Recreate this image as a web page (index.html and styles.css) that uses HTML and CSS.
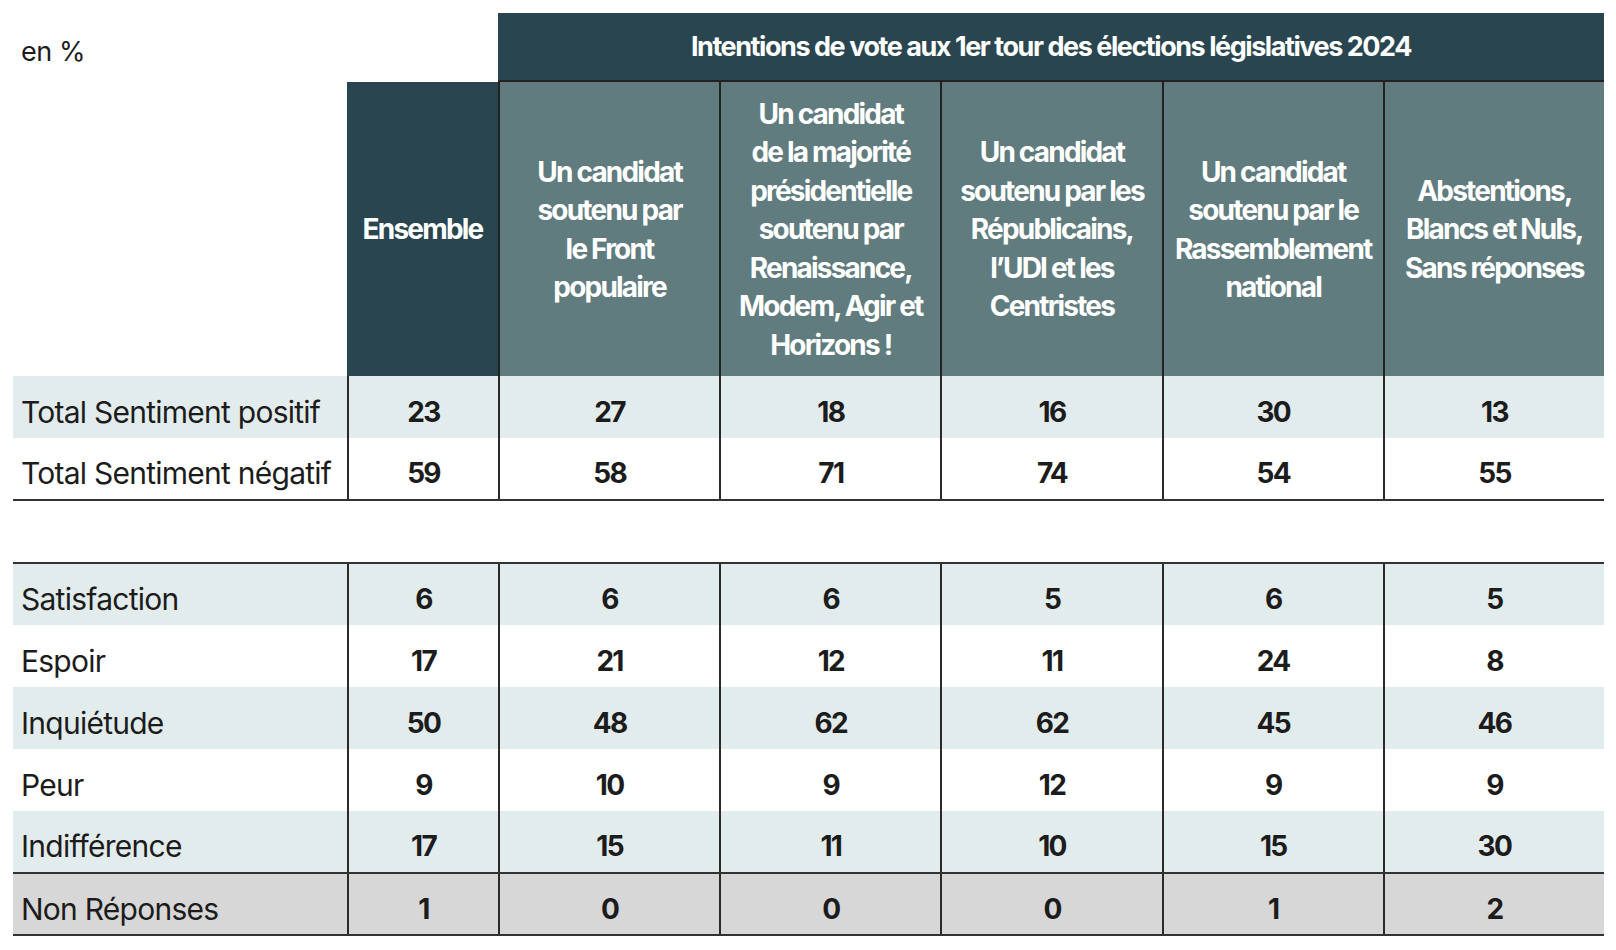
FILE: index.html
```html
<!DOCTYPE html>
<html lang="fr">
<head>
<meta charset="utf-8">
<title>Intentions de vote</title>
<link rel="stylesheet" href="styles.css">
</head>
<body>
<div class="table">
  <div class="row row-top">
    <div class="cell unit">en %</div>
    <div class="cell title">Intentions de vote aux 1er tour des élections législatives 2024</div>
  </div>
  <div class="row row-head">
    <div class="cell"></div>
    <div class="cell head head-all">Ensemble</div>
    <div class="cell head head-grp">Un candidat<br>soutenu par<br>le Front<br>populaire</div>
    <div class="cell head head-grp">Un candidat<br>de la majorité<br>présidentielle<br>soutenu par<br>Renaissance,<br>Modem, Agir et<br>Horizons !</div>
    <div class="cell head head-grp">Un candidat<br>soutenu par les<br>Républicains,<br>l’UDI et les<br>Centristes</div>
    <div class="cell head head-grp">Un candidat<br>soutenu par le<br>Rassemblement<br>national</div>
    <div class="cell head head-grp">Abstentions,<br>Blancs et Nuls,<br>Sans réponses</div>
  </div>
  <div class="row row-data alt">
    <div class="cell lab">Total Sentiment positif</div>
    <div class="cell num">23</div><div class="cell num">27</div><div class="cell num">18</div><div class="cell num">16</div><div class="cell num">30</div><div class="cell num">13</div>
  </div>
  <div class="row row-data row-end">
    <div class="cell lab">Total Sentiment négatif</div>
    <div class="cell num">59</div><div class="cell num">58</div><div class="cell num">71</div><div class="cell num">74</div><div class="cell num">54</div><div class="cell num">55</div>
  </div>
  <div class="spacer"></div>
  <div class="row row-data row-start alt">
    <div class="cell lab">Satisfaction</div>
    <div class="cell num">6</div><div class="cell num">6</div><div class="cell num">6</div><div class="cell num">5</div><div class="cell num">6</div><div class="cell num">5</div>
  </div>
  <div class="row row-data">
    <div class="cell lab">Espoir</div>
    <div class="cell num">17</div><div class="cell num">21</div><div class="cell num">12</div><div class="cell num">11</div><div class="cell num">24</div><div class="cell num">8</div>
  </div>
  <div class="row row-data alt">
    <div class="cell lab">Inquiétude</div>
    <div class="cell num">50</div><div class="cell num">48</div><div class="cell num">62</div><div class="cell num">62</div><div class="cell num">45</div><div class="cell num">46</div>
  </div>
  <div class="row row-data">
    <div class="cell lab">Peur</div>
    <div class="cell num">9</div><div class="cell num">10</div><div class="cell num">9</div><div class="cell num">12</div><div class="cell num">9</div><div class="cell num">9</div>
  </div>
  <div class="row row-data alt row-short">
    <div class="cell lab">Indifférence</div>
    <div class="cell num">17</div><div class="cell num">15</div><div class="cell num">11</div><div class="cell num">10</div><div class="cell num">15</div><div class="cell num">30</div>
  </div>
  <div class="row row-data row-nr">
    <div class="cell lab">Non Réponses</div>
    <div class="cell num">1</div><div class="cell num">0</div><div class="cell num">0</div><div class="cell num">0</div><div class="cell num">1</div><div class="cell num">2</div>
  </div>
</div>
</body>
</html>
```
FILE: styles.css
```css
html, body {
  margin: 0;
  padding: 0;
  background: #ffffff;
}

body {
  font-family: Inter, "Liberation Sans", sans-serif;
  color: #1c1c1c;
}

.table {
  width: 1591px;
  margin: 13px 0 0 13px;
  display: flex;
  flex-direction: column;
}

.row {
  display: grid;
  grid-template-columns: 334px 151px repeat(5, 1fr);
  box-sizing: border-box;
}

.cell {
  box-sizing: border-box;
  display: flex;
  align-items: center;
  justify-content: center;
  text-align: center;
}

/* top band */
.row-top {
  height: 69px;
}

.unit {
  grid-column: span 2;
  justify-content: flex-start;
  padding: 8px 0 0 8px;
  font-size: 27px;
  letter-spacing: -0.4px;
}

.title {
  grid-column: span 5;
  background: #294650;
  color: #ffffff;
  font-weight: 700;
  font-size: 27px;
  letter-spacing: -1.45px;
  border-bottom: 2px solid #222222;
}

/* column headers */
.row-head {
  height: 294px;
}

.head {
  color: #ffffff;
  font-weight: 700;
  font-size: 28px;
  line-height: 38.5px;
  letter-spacing: -1.8px;
  padding-top: 1px;
}

.head-all {
  background: #294650;
}

.head-grp {
  background: #607c7e;
  border-left: 2px solid #222222;
}

/* data rows */
.row-data {
  height: 62px;
}

.alt {
  background: #e3eced;
}

.row-end {
  height: 63px;
  border-bottom: 2px solid #333333;
}

.spacer {
  height: 61px;
}

.row-start {
  height: 63px;
  border-top: 2px solid #333333;
}

.row-short {
  height: 61px;
}

.row-nr {
  height: 64px;
  background: #d7d7d7;
  border-top: 2px solid #333333;
  border-bottom: 2px solid #333333;
}

.lab {
  justify-content: flex-start;
  padding: 9px 0 0 8px;
  font-size: 30px;
  letter-spacing: -0.75px;
  white-space: nowrap;
}

.num {
  border-left: 2px solid #2a2a2a;
  padding-top: 9px;
  font-size: 28px;
  font-weight: 700;
  letter-spacing: -1.7px;
}
```
